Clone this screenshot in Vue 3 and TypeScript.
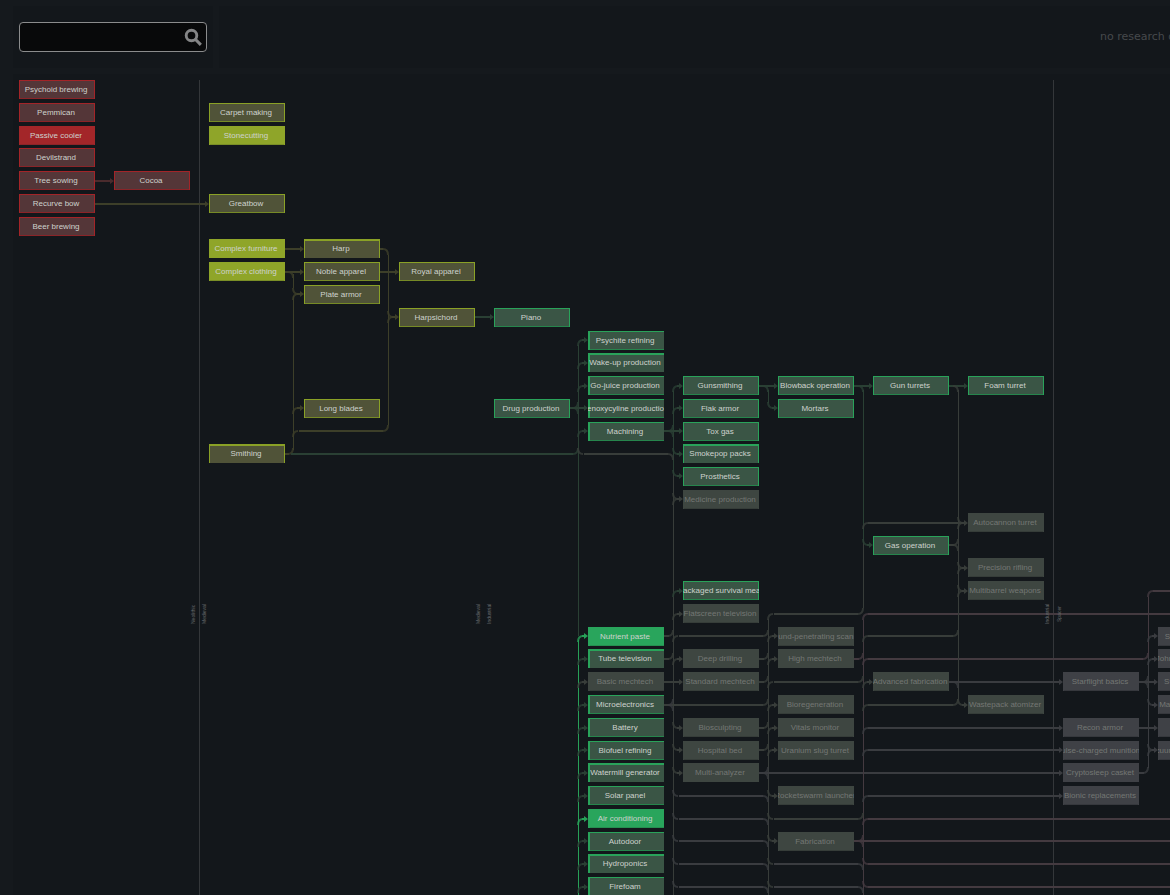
<script setup lang="ts">
import { ref } from 'vue'

type Era = 'neo' | 'med' | 'ind' | 'spa'
type State = 'open' | 'done' | 'locked'
type Tone = 'red' | 'olive' | 'green' | 'grey' | 'slate' | 'mauve' | 'bright' | 'rule'
type Bend = 'rb' | 'ra' | 'lb' | 'la'

interface Project { col: number; row: number; name: string; era: Era; state: State }
interface Stroke { d: string; tone: Tone; curve: boolean }

const query = ref('')

const colX = [6, 101, 196, 291, 386, 481, 575, 670, 765, 860, 955, 1050, 1145]
const rowY = [6, 29, 52, 74, 97, 120, 143, 165, 188, 211, 234, 257, 279, 302, 325, 348, 370, 393,
  416, 439, 462, 484, 507, 530, 553, 575, 598, 621, 644, 667, 689, 712, 735, 758, 780, 803]
const midY = [16, 39, 62, 84, 107, 130, 153, 175, 198, 220, 243, 266, 289, 312, 334, 357, 380, 402,
  425, 449, 471, 494, 517, 540, 562, 585, 608, 631, 654, 676, 699, 722, 745, 767, 790, 813]
const tallTop = [7, 12, 16, 25, 30, 34]
const trunkX: Record<number, number> = { 3: 280, 4: 375, 6: 565, 7: 660, 8: 755, 9: 850, 10: 945, 12: 1135 }
const NODE_WIDTH = 76
const END = 1400
const BOTTOM = 900

const projects: Project[] = []
function add(era: Era, state: State, col: number, items: [number, string][]) {
  for (const [row, name] of items) projects.push({ col, row, name, era, state })
}

add('neo', 'open', 0, [[0, 'Psychoid brewing'], [1, 'Pemmican'], [3, 'Devilstrand'], [4, 'Tree sowing'], [5, 'Recurve bow'], [6, 'Beer brewing']])
add('neo', 'done', 0, [[2, 'Passive cooler']])
add('neo', 'open', 1, [[4, 'Cocoa']])
add('med', 'open', 2, [[1, 'Carpet making'], [5, 'Greatbow'], [16, 'Smithing']])
add('med', 'done', 2, [[2, 'Stonecutting'], [7, 'Complex furniture'], [8, 'Complex clothing']])
add('med', 'open', 3, [[7, 'Harp'], [8, 'Noble apparel'], [9, 'Plate armor'], [14, 'Long blades']])
add('med', 'open', 4, [[8, 'Royal apparel'], [10, 'Harpsichord']])
add('ind', 'open', 5, [[10, 'Piano'], [14, 'Drug production']])
add('ind', 'open', 6, [[11, 'Psychite refining'], [12, 'Wake-up production'], [13, 'Go-juice production'],
  [14, 'Penoxycyline production'], [15, 'Machining'], [25, 'Tube television'], [27, 'Microelectronics'],
  [28, 'Battery'], [29, 'Biofuel refining'], [30, 'Watermill generator'], [31, 'Solar panel'],
  [33, 'Autodoor'], [34, 'Hydroponics'], [35, 'Firefoam']])
add('ind', 'done', 6, [[24, 'Nutrient paste'], [32, 'Air conditioning']])
add('ind', 'locked', 6, [[26, 'Basic mechtech']])
add('ind', 'open', 7, [[13, 'Gunsmithing'], [14, 'Flak armor'], [15, 'Tox gas'], [16, 'Smokepop packs'],
  [17, 'Prosthetics'], [22, 'Packaged survival meal']])
add('ind', 'locked', 7, [[18, 'Medicine production'], [23, 'Flatscreen television'], [25, 'Deep drilling'],
  [26, 'Standard mechtech'], [28, 'Biosculpting'], [29, 'Hospital bed'], [30, 'Multi-analyzer']])
add('ind', 'open', 8, [[13, 'Blowback operation'], [14, 'Mortars']])
add('ind', 'locked', 8, [[24, 'Ground-penetrating scanner'], [25, 'High mechtech'], [27, 'Bioregeneration'],
  [28, 'Vitals monitor'], [29, 'Uranium slug turret'], [31, 'Rocketswarm launcher'], [33, 'Fabrication']])
add('ind', 'open', 9, [[13, 'Gun turrets'], [20, 'Gas operation']])
add('ind', 'locked', 9, [[26, 'Advanced fabrication']])
add('ind', 'open', 10, [[13, 'Foam turret']])
add('ind', 'locked', 10, [[19, 'Autocannon turret'], [21, 'Precision rifling'], [22, 'Multibarrel weapons'], [27, 'Wastepack atomizer']])
add('spa', 'locked', 11, [[26, 'Starflight basics'], [28, 'Recon armor'], [29, 'Pulse-charged munitions'],
  [30, 'Cryptosleep casket'], [31, 'Bionic replacements']])
add('spa', 'locked', 12, [[24, 'Starship reactors'], [25, 'Johnson-Tanaka drive'], [26, 'Starflight sensors'],
  [27, 'Machine persuasion'], [28, 'Marine armor'], [29, 'Vacuum cryptosleep casket']])

const strokes: Stroke[] = []
const h = (tone: Tone, row: number, x1: number, x2: number) =>
  strokes.push({ d: `M${x1} ${midY[row] - 1}H${x2}v2H${x1}z`, tone, curve: false })
const v = (tone: Tone, x: number, y1: number, y2: number) =>
  strokes.push({ d: `M${x} ${y1}h1V${y2}h-1z`, tone, curve: false })
function bend(tone: Tone, trunk: number, row: number, ...kinds: Bend[]) {
  const x = trunkX[trunk]
  const y = midY[row]
  for (const k of kinds) {
    const sx = k[0] === 'r' ? 5 : -5
    const sy = k[1] === 'b' ? 6 : -6
    strokes.push({ d: `M${x} ${y + sy}Q${x} ${y} ${x + sx} ${y}`, tone, curve: true })
  }
}
function arrow(tone: Tone, col: number, row: number) {
  const x = colX[col]
  const y = midY[row]
  strokes.push({ d: `M${x - 6} ${y - 1}h2v-2l4 3l-4 3v-2h-2z`, tone, curve: false })
}
function enter(tone: Tone, col: number, row: number, ...kinds: Bend[]) {
  bend(tone, col, row, ...kinds)
  h(tone, row, trunkX[col] + 4, colX[col] - 5)
  arrow(tone, col, row)
}
function straight(tone: Tone, from: number, to: number, row: number) {
  h(tone, row, colX[from] + NODE_WIDTH, colX[to] - 4)
  arrow(tone, to, row)
}
const leave = (tone: Tone, col: number, row: number) =>
  h(tone, row, colX[col] + NODE_WIDTH, colX[col] + NODE_WIDTH + 5)

// Era boundaries
v('rule', 186, 6, BOTTOM)
v('rule', 1040, 6, BOTTOM)

// Neolithic and medieval
straight('red', 0, 1, 4)
straight('olive', 0, 2, 5)
straight('olive', 2, 3, 7)
straight('olive', 2, 3, 8)
straight('olive', 3, 4, 8)
v('olive', 280, 200, 214)
v('olive', 280, 222, 376)
bend('olive', 3, 8, 'lb')
enter('olive', 3, 9, 'ra', 'rb')
enter('olive', 3, 14, 'rb')
bend('olive', 3, 15, 'rb')
h('olive', 15, 286, 370)
bend('olive', 4, 15, 'la')
h('olive', 16, 272, 276)
bend('olive', 3, 16, 'la')
h('olive', 7, 367, 370)
bend('olive', 4, 7, 'lb')
v('olive', 375, 181, 351)
enter('olive', 4, 10, 'ra', 'rb')
straight('green', 4, 5, 10)
h('green', 16, 278, 560)

// Power and drug trunk
v('green', 565, 271, 562)
v('bright', 565, 566, BOTTOM)
for (const r of [11, 12, 13, 15]) enter('green', 6, r, 'rb')
straight('green', 5, 6, 14)
bend('green', 6, 14, 'la', 'lb')
bend('green', 6, 16, 'la')
bend('grey', 6, 16, 'ra')
h('grey', 16, 571, 655)
for (const r of [25, 26, 27, 28, 29, 30, 31, 33, 34, 35]) enter(r === 26 ? 'grey' : 'green', 6, r, 'rb')
for (const r of [24, 32]) enter('bright', 6, r, 'rb')

// Machining and electronics trunk
v('green', 660, 317, 400)
v('grey', 660, 400, BOTTOM)
for (const r of [13, 14, 22]) enter('green', 7, r, 'rb')
straight('green', 6, 7, 15)
bend('green', 7, 15, 'la', 'lb')
for (const r of [16, 17]) enter('green', 7, r, 'ra')
bend('grey', 7, 16, 'lb')
enter('grey', 7, 18, 'ra', 'rb')
for (const r of [23, 25]) enter('grey', 7, r, 'rb')
for (const r of [24, 25]) {
  leave('grey', 6, r)
  bend('grey', 7, r, 'la')
}
bend('grey', 7, 24, 'rb')
h('grey', 24, 666, 750)
straight('grey', 6, 7, 26)
h('grey', 27, 651, 750)
bend('slate', 7, 27, 'la', 'lb')
for (const r of [28, 29, 30]) enter('grey', 7, r, 'ra')
for (const r of [31, 32, 33, 34, 35]) {
  bend('slate', 7, r, 'ra')
  h('slate', r, 666, 750)
}

// Gunsmithing and research-bench trunk
straight('green', 7, 8, 13)
bend('green', 8, 13, 'lb')
v('green', 755, 316, 329)
enter('green', 8, 14, 'ra')
v('grey', 755, 545, BOTTOM)
bend('grey', 8, 23, 'rb')
h('grey', 23, 761, 845)
for (const r of [24, 25, 26, 27, 28, 29]) bend('grey', 8, r, 'la')
for (const r of [25, 26, 28, 29]) leave('grey', 7, r)
for (const r of [24, 25, 27, 28, 29]) enter('grey', 8, r, 'rb')
bend('grey', 8, 26, 'rb')
h('grey', 26, 761, 845)
straight('slate', 7, 11, 30)
bend('slate', 8, 30, 'la', 'lb')
for (const r of [31, 32, 33, 34, 35]) bend('slate', 8, r, 'lb')
for (const r of [31, 33]) enter('grey', 8, r, 'ra')
for (const r of [32, 34, 35]) {
  bend('grey', 8, r, 'ra')
  h(r === 32 ? 'grey' : 'slate', r, 761, 845)
}

// Turret and fabrication trunk
straight('green', 8, 9, 13)
bend('green', 9, 13, 'lb')
v('green', 850, 316, 466)
v('grey', 850, 466, 534)
v('mauve', 850, 546, BOTTOM)
bend('grey', 9, 19, 'rb')
h('grey', 19, 855, 951)
enter('green', 9, 20, 'ra')
bend('grey', 9, 23, 'la')
bend('mauve', 9, 23, 'rb')
h('mauve', 23, 855, END)
bend('grey', 9, 24, 'rb')
h('grey', 24, 855, 940)
leave('mauve', 8, 25)
bend('mauve', 9, 25, 'la', 'rb')
h('mauve', 25, 855, 1130)
bend('grey', 9, 26, 'la')
enter('grey', 9, 26, 'rb')
bend('grey', 9, 27, 'rb')
h('grey', 27, 855, 940)
for (const r of [28, 29, 31]) {
  bend('slate', 9, r, 'rb')
  h('slate', r, 855, 1046)
  arrow('slate', 11, r)
}
bend('grey', 9, 32, 'la')
bend('mauve', 9, 32, 'rb')
h('mauve', 32, 855, END)
h('mauve', 33, 841, END)
bend('mauve', 9, 33, 'la', 'lb')
for (const r of [34, 35]) {
  bend('slate', 9, r, 'lb')
  bend('mauve', 9, r, 'ra')
  h('mauve', r, 855, END)
}

// Heavy weapons trunk
straight('green', 9, 10, 13)
bend('grey', 10, 13, 'lb')
v('grey', 945, 316, 626)
for (const r of [19, 21, 22]) enter('grey', 10, r, 'ra', 'rb')
leave('grey', 9, 20)
bend('grey', 10, 20, 'la', 'lb')
bend('grey', 10, 24, 'la')
straight('slate', 9, 11, 26)
bend('slate', 10, 26, 'lb')
bend('grey', 10, 27, 'la')
enter('grey', 10, 27, 'ra')

// Spacer trunk
bend('mauve', 12, 22, 'rb')
h('mauve', 22, 1140, END)
v('mauve', 1135, 523, 580)
v('slate', 1135, 580, 694)
bend('mauve', 12, 25, 'la')
for (const r of [24, 25]) enter('slate', 12, r, 'rb')
for (const r of [26, 28]) straight('slate', 11, 12, r)
bend('slate', 12, 26, 'la', 'lb')
enter('slate', 12, 27, 'ra')
enter('slate', 12, 29, 'ra', 'rb')
leave('slate', 11, 30)
bend('slate', 12, 30, 'la')

const eraLabels = [
  { name: 'Neolithic', x: 178 },
  { name: 'Medieval', x: 189 },
  { name: 'Medieval', x: 463 },
  { name: 'Industrial', x: 474 },
  { name: 'Industrial', x: 1032 },
  { name: 'Spacer', x: 1044 },
]
</script>

<template>
  <main class="screen">
    <header class="top">
      <form class="panel search-panel" @submit.prevent>
        <div class="search">
          <input v-model="query" type="text" aria-label="Search research" />
          <button type="submit" aria-label="Search">
            <svg viewBox="0 0 18 18" width="18" height="18" fill="none" stroke="#848586">
              <circle cx="7.5" cy="7.5" r="5.3" stroke-width="2.9" />
              <path d="M11.6 11.6L15.8 15.8" stroke-width="3" stroke-linecap="square" />
            </svg>
          </button>
        </div>
      </form>
      <div class="panel queue"><span>no research queued</span></div>
    </header>

    <section class="panel tree" aria-label="Research tree">
      <svg class="links" aria-hidden="true">
        <path
          v-for="(s, i) in strokes"
          :key="i"
          :d="s.d"
          :class="[s.tone, s.curve ? 'curve' : 'solid']"
        />
      </svg>
      <span v-for="(l, i) in eraLabels" :key="i" class="era" :style="{ left: l.x + 'px' }">{{ l.name }}</span>
      <button
        v-for="p in projects"
        :key="p.name"
        type="button"
        class="node"
        :class="[p.era, p.state, { first: p.col === 6, tall: tallTop.includes(p.row) }]"
        :style="{ left: colX[p.col] + 'px', top: rowY[p.row] + 'px' }"
      >
        <span>{{ p.name }}</span>
      </button>
    </section>
  </main>
</template>

<style>
body {
  margin: 0;
  background: #15191d;
}
</style>

<style scoped>
.screen {
  box-sizing: border-box;
  height: 100vh;
  display: flex;
  flex-direction: column;
  gap: 6px;
  padding: 6px 0 0 13px;
  overflow: hidden;
  background: #15191d;
  font-family: "Liberation Sans", Arial, sans-serif;
}
.panel {
  background: #13171b;
}
.top {
  display: flex;
  gap: 6px;
}
.search-panel {
  flex: none;
  width: 188px;
  padding: 16px 6px;
}
.search {
  box-sizing: border-box;
  display: flex;
  align-items: center;
  height: 30px;
  padding-right: 4px;
  border: 1px solid #8b8c8d;
  border-radius: 4px;
  background: #08090a;
}
.search input {
  flex: 1;
  min-width: 0;
  height: 26px;
  padding: 0 6px;
  border: 0;
  outline: 0;
  background: transparent;
  color: #c8c9ca;
  font: 12px "Liberation Sans", Arial, sans-serif;
}
.search button {
  display: flex;
  padding: 0;
  border: 0;
  background: none;
}
.queue {
  flex: 1;
  min-width: 0;
  display: flex;
  align-items: center;
  justify-content: flex-end;
}
.queue span {
  width: 70px;
  overflow: hidden;
  white-space: nowrap;
  color: #46494c;
  font: 11px/16px "DejaVu Sans", sans-serif;
}
.tree {
  position: relative;
  flex: 1;
  min-height: 0;
  overflow: hidden;
}
.links {
  position: absolute;
  inset: 0;
  width: 100%;
  height: 100%;
}
.curve { fill: none; stroke: currentColor; stroke-width: 2; opacity: 0.8; }
.solid { fill: currentColor; }
.red { color: #4a2b2d; }
.olive { color: #3d3f29; }
.green { color: #2a4034; }
.grey { color: #383d3a; }
.slate { color: #3a3c40; }
.mauve { color: #443a40; }
.bright { color: #27a057; }
.rule { color: #34373a; }

.era {
  position: absolute;
  top: 530px;
  height: 20px;
  writing-mode: vertical-rl;
  transform: rotate(180deg);
  text-align: center;
  white-space: nowrap;
  color: #66696b;
  font-size: 5px;
  line-height: 5px;
}

.node {
  --fill: #3a5545;
  --edge: #29a35a;
  --low: #26854c;
  position: absolute;
  display: flex;
  align-items: center;
  justify-content: center;
  width: 76px;
  height: 19px;
  padding: 0 2px 0 0;
  border: 0;
  overflow: hidden;
  background: var(--fill);
  box-shadow: inset 1px 0 var(--edge), inset -1px 0 var(--edge), inset 0 1px var(--edge), inset 0 -1px var(--low);
  color: #ced2cd;
  font: 8px/19px "Liberation Sans", Arial, sans-serif;
}
.node span {
  flex: none;
  white-space: nowrap;
}
.node.tall {
  box-shadow: inset 1px 0 var(--edge), inset -1px 0 var(--edge), inset 0 2px var(--edge);
}
.node.first {
  box-shadow: inset 2px 0 var(--edge), inset 0 1px var(--edge), inset 0 -1px var(--low);
}
.node.first.tall {
  box-shadow: inset 2px 0 var(--edge), inset 0 2px var(--edge);
}
.neo { --fill: #543638; --edge: #a32428; --low: #8a2428; }
.med { --fill: #505338; --edge: #8aa126; --low: #768a26; }
.neo.done { --fill: #a32629; --edge: #a32629; --low: #8d2428; }
.med.done { --fill: #8fa529; --edge: #8fa529; --low: #7a8e26; }
.ind.done { --fill: #29a55c; --edge: #29a55c; --low: #268f51; }
.ind.locked { --fill: #3e4641; --edge: #3e4641; --low: #363d39; }
.spa.locked { --fill: #3f4146; --edge: #3f4146; --low: #36383d; }
.node.locked { color: #747774; }
</style>
